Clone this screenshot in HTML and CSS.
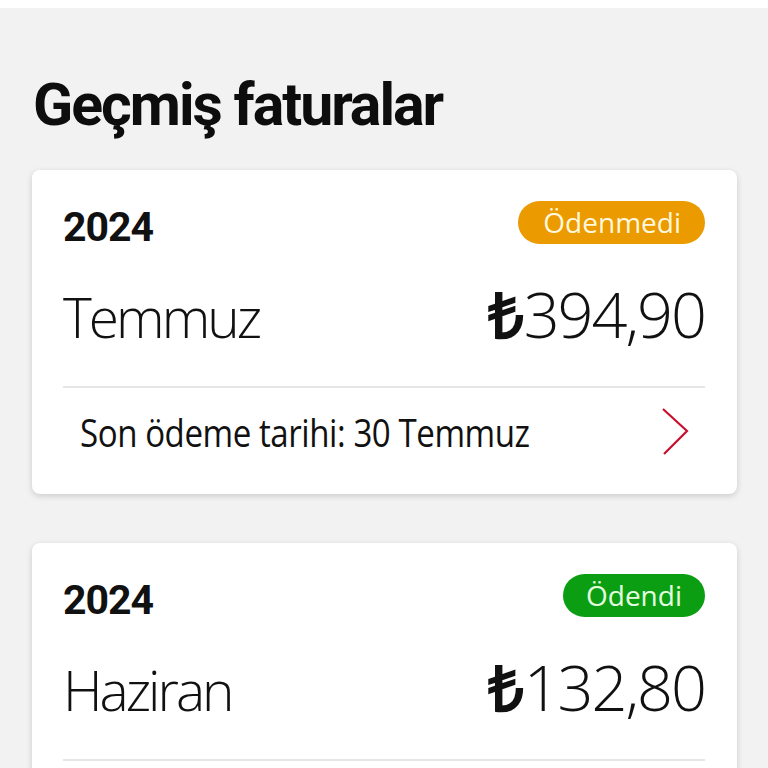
FILE: index.html
```html
<!DOCTYPE html>
<html lang="tr">
<head>
  <meta charset="UTF-8">
  <title>Geçmiş faturalar</title>
  <link rel="stylesheet" href="styles.css">
</head>
<body>
<div class="screen">
  <h1 class="title">Geçmiş faturalar</h1>

  <div class="bill">
    <div class="bill-top">
      <span class="year">2024</span>
      <span class="badge badge-unpaid">Ödenmedi</span>
    </div>
    <div class="bill-main">
      <span class="month">Temmuz</span>
      <span class="amount"><b class="lira">₺</b>394,90</span>
    </div>
    <div class="bill-foot">
      <span class="due">Son ödeme tarihi: 30 Temmuz</span>
      <svg class="chevron" width="30" height="50" viewBox="0 0 30 50">
        <path d="M3 2 L27 24 L4 47" fill="none" stroke="#c8102e" stroke-width="2.2"/>
      </svg>
    </div>
  </div>

  <div class="bill">
    <div class="bill-top">
      <span class="year">2024</span>
      <span class="badge badge-paid">Ödendi</span>
    </div>
    <div class="bill-main">
      <span class="month">Haziran</span>
      <span class="amount"><b class="lira">₺</b>132,80</span>
    </div>
    <div class="bill-foot"></div>
  </div>
</div>
</body>
</html>
```

FILE: styles.css
```css
html, body {
  margin: 0;
  padding: 0;
  height: 100%;
  overflow: hidden;
}

body {
  background: #fff;
  font-family: "Open Sans", "Noto Sans", sans-serif;
  color: #111;
}

.screen {
  margin-top: 8px;
  background: #f2f2f2;
  min-height: 100%;
  padding: 65px 31px 0 32px;
}

.title {
  font: bold 59px Roboto, sans-serif;
  letter-spacing: -2px;
  color: #0d0d0d;
  margin: 0 0 33px 1px;
  line-height: 64px;
}

.bill {
  background: #fff;
  border-radius: 8px;
  box-shadow: 0 2px 6px rgba(0, 0, 0, 0.16);
  padding: 31px 32px 0 31px;
  margin-bottom: 49px;
}

.bill-top {
  display: flex;
  justify-content: space-between;
  align-items: center;
  height: 43px;
}

.year {
  font: bold 41px Roboto, sans-serif;
  letter-spacing: -1px;
  color: #111;
  margin-top: 8px;
}

.badge {
  border-radius: 22px;
  padding: 0 23px;
  height: 43px;
  line-height: 42px;
  font-size: 28px;
  color: #fff8dc;
}

.badge-unpaid {
  background: #eb9a00;
  padding: 0 24px 0 25px;
}

.badge-paid {
  background: #0c9e12;
  color: #e4ffe0;
}

.bill-main {
  display: flex;
  justify-content: space-between;
  align-items: baseline;
  box-sizing: border-box;
  height: 144px;
  padding-top: 27px;
  border-bottom: 2px solid #e6e6e6;
  line-height: 62px;
}

.month {
  font: 300 55px "Open Sans", sans-serif;
  letter-spacing: -3px;
}

.amount {
  font: 300 63px "Open Sans", sans-serif;
  letter-spacing: -2px;
}

.lira {
  font-weight: 700;
  margin-right: 2px;
}

.bill-foot {
  display: flex;
  justify-content: space-between;
  align-items: center;
  box-sizing: border-box;
  height: 106px;
  padding: 0 15px 18px 17px;
}

.due {
  display: inline-block;
  font-size: 38px;
  letter-spacing: -0.5px;
  color: #111;
  white-space: nowrap;
  transform: scaleX(0.87);
  transform-origin: left center;
}

.chevron {
  display: block;
}
```
